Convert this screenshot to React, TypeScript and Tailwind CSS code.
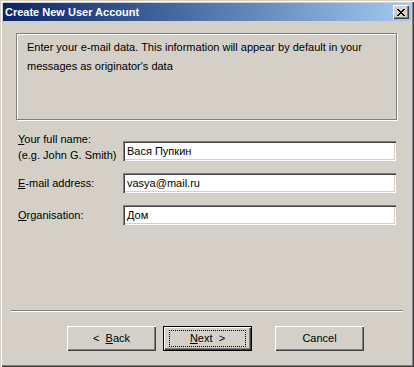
const font = { fontFamily: '"Liberation Sans", Arial, sans-serif' }

function Field({ label, sub, accessKey, value }: { label: string; sub?: string; accessKey: number; value: string }) {
  return (
    <div className="flex items-center h-[32px]">
      <div className={'w-[105px] whitespace-nowrap text-[11px] leading-[16px] text-black ' + (sub ? 'pb-[8px]' : '')}>
        <div>
          {label.slice(0, accessKey)}
          <span className="underline">{label[accessKey]}</span>
          {label.slice(accessKey + 1)}
        </div>
        {sub && <div>{sub}</div>}
      </div>
      <div className="w-[273px] h-[20px] bg-white shadow-[inset_1px_1px_#808080,inset_2px_2px_#404040,inset_-1px_-1px_#ffffff,inset_-2px_-2px_#d4d0c8] px-[4px] flex items-center text-[11px] text-black">
        {value}
      </div>
    </div>
  )
}

function Button({ children, def }: { children: React.ReactNode; def?: boolean }) {
  return (
    <div
      className={
        'w-[89px] h-[25px] bg-[#d4d0c8] flex items-center justify-center text-[11px] text-black ' +
        (def
          ? 'border border-black shadow-[inset_1px_1px_#ffffff,inset_-1px_-1px_#404040,inset_-2px_-2px_#808080]'
          : 'shadow-[inset_1px_1px_#ffffff,inset_-1px_-1px_#404040,inset_-2px_-2px_#808080]')
      }
    >
      {def ? (
        <div className="w-[77px] h-[17px] border border-dotted border-black flex items-center justify-center">{children}</div>
      ) : (
        children
      )}
    </div>
  )
}

export default function App() {
  return (
    <div
      style={font}
      className="w-[414px] h-[367px] bg-[#d4d0c8] p-[3px] flex flex-col shadow-[inset_1px_1px_#d4d0c8,inset_2px_2px_#ffffff,inset_-1px_-1px_#404040,inset_-2px_-2px_#808080]"
    >
      <div className="h-[18px] flex items-center justify-between pl-[2px] pr-[2px] bg-gradient-to-r from-[#0a246a] to-[#a6caf0]">
        <span className="text-white font-bold text-[11px]">Create New User Account</span>
        <div className="w-[16px] h-[14px] bg-[#d4d0c8] flex items-center justify-center shadow-[inset_1px_1px_#ffffff,inset_-1px_-1px_#404040,inset_-2px_-2px_#808080]">
          <svg width="8" height="7" viewBox="0 0 8 7">
            <path d="M0 0h2v1h1v1h2V1h1V0h2v1H7v1H6v1H5v1h1v1h1v1h1v1H6V6H5V5H3v1H2v1H0V6h1V5h1V4h1V3H2V2H1V1H0z" fill="#000" />
          </svg>
        </div>
      </div>

      <div className="ml-[13px] mr-[14px] mt-[12px] h-[87px] border border-[#808080] shadow-[1px_1px_#ffffff,inset_1px_1px_#ffffff] px-[10px] pt-[4px] text-[11px] leading-[19px] text-black">
        Enter your e-mail data. This information will appear by default in your messages as originator's data
      </div>

      <div className="ml-[15px] mt-[15px] flex flex-col">
        <Field label="Your full name:" sub="(e.g. John G. Smith)" accessKey={0} value="Вася Пупкин" />
        <Field label="E-mail address:" accessKey={0} value="vasya@mail.ru" />
        <Field label="Organisation:" accessKey={0} value="Дом" />
      </div>

      <div className="mx-[8px] mt-[auto] border-t border-[#808080] border-b border-b-white" />

      <div className="flex pl-[64px] gap-[7px] mt-[14px] mb-[13px]">
        <Button>
          <span>&lt;&nbsp;&nbsp;<span className="underline">B</span>ack</span>
        </Button>
        <Button def>
          <span><span className="underline">N</span>ext&nbsp;&nbsp;&gt;</span>
        </Button>
        <div className="w-[9px]" />
        <Button>Cancel</Button>
      </div>
    </div>
  )
}
